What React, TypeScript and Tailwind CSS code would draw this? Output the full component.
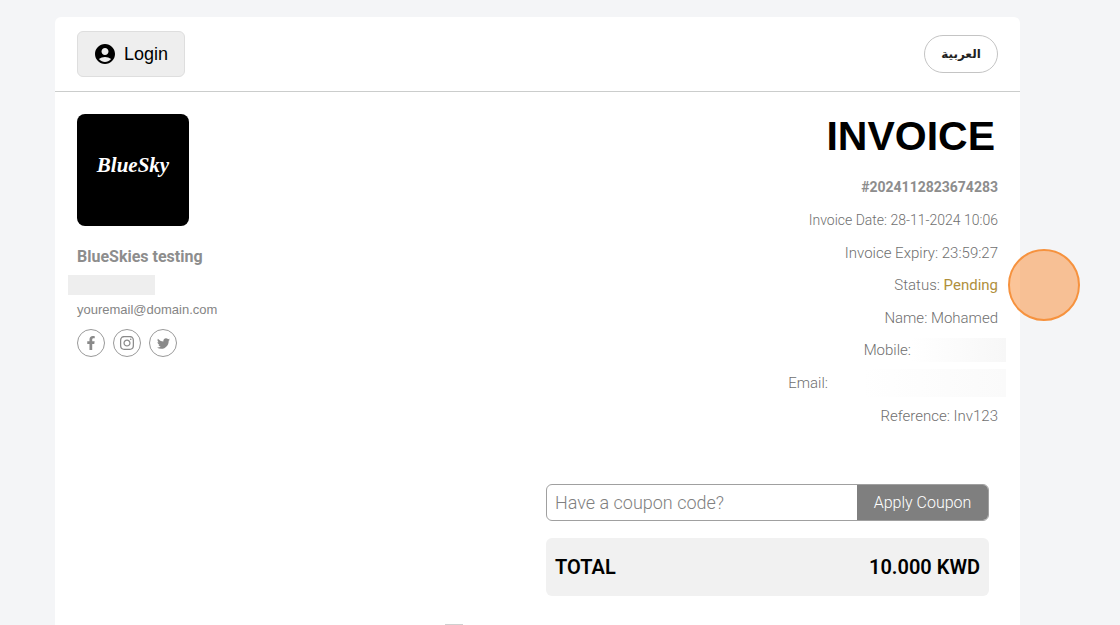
import { useState } from "react";
import { FaFacebookF, FaInstagram, FaTwitter } from "react-icons/fa";
import { MdAccountCircle } from "react-icons/md";

const socials = [
  { label: "Facebook", icon: FaFacebookF, size: 14 },
  { label: "Instagram", icon: FaInstagram, size: 16 },
  { label: "Twitter", icon: FaTwitter, size: 13 },
];

function Header() {
  return (
    <header className="flex items-center justify-between border-b border-[#cbcdcc] px-[22px] py-[14px]">
      <button className="flex h-[46px] items-center gap-[7px] rounded-md border border-[#dedede] bg-[#eeeeee] pr-4 pl-[15px] text-lg text-black">
        <MdAccountCircle size={24} />
        Login
      </button>
      <button
        lang="ar"
        className="h-[38px] w-[74px] rounded-full border border-[#c4c4c4] bg-white font-['DejaVu_Sans',sans-serif] text-xs font-bold text-[#222222]"
      >
        العربية
      </button>
    </header>
  );
}

function Vendor() {
  return (
    <section>
      <div className="flex size-28 items-center justify-center rounded-lg bg-black pb-2 font-['Liberation_Serif',serif] text-[21px] font-bold text-white italic">
        BlueSky
      </div>
      <h2 className="mt-5 font-['Roboto',sans-serif] text-base leading-[22px] font-bold text-[#8d8d8d]">
        BlueSkies testing
      </h2>
      <div className="mt-[7px] -ml-[9px] h-5 w-[87px] bg-[#eeeeee]" />
      <p className="mt-[5px] text-[13px] leading-5 text-[#858585]">
        youremail@domain.com
      </p>
      <div className="mt-[9px] flex gap-2">
        {socials.map(({ label, icon: Icon, size }) => (
          <a
            key={label}
            href="#"
            aria-label={label}
            className="flex size-7 items-center justify-center rounded-full border border-[#999999] text-[#8a8a8a]"
          >
            <Icon size={size} />
          </a>
        ))}
      </div>
    </section>
  );
}

function Details() {
  return (
    <section className="text-right text-[#6f6f6f]">
      <h1 className="pr-[3px] text-[41px] leading-[44px] font-bold text-black">
        INVOICE
      </h1>
      <div className="mt-[13px] grid h-[261px] grid-rows-8 items-center font-['Roboto',sans-serif] text-[15px] leading-6 font-light">
        <p className="text-sm font-bold text-[#8d8d8d]">#2024112823674283</p>
        <p className="text-sm">Invoice Date: 28-11-2024 10:06</p>
        <p className="text-[15px]">Invoice Expiry: 23:59:27</p>
        <p className="relative">
          Status: <span className="font-normal text-[#b08f3c]">Pending</span>
          <span className="absolute top-1/2 -right-[82px] size-[72px] -translate-y-1/2 rounded-full border-2 border-[#f6923e] bg-[#f99d54]/60" />
        </p>
        <p>Name: Mohamed</p>
        <div className="-mr-2 flex items-center justify-end">
          Mobile:
          <span className="h-6 w-[95px] bg-linear-to-r from-white to-[#f7f7f7]" />
        </div>
        <div className="-mr-2 flex items-center justify-end gap-[34px]">
          Email:
          <span className="h-7 w-36 bg-linear-to-r from-white to-[#fafafa]" />
        </div>
        <p>Reference: Inv123</p>
      </div>
    </section>
  );
}

function Summary() {
  const [coupon, setCoupon] = useState("");

  return (
    <section className="mt-[52px] mr-[31px] ml-auto w-[443px] font-['Roboto',sans-serif]">
      <form
        className="flex h-[37px] overflow-hidden rounded-md border border-[#a0a0a0]"
        onSubmit={(e) => e.preventDefault()}
      >
        <input
          aria-label="Coupon code"
          placeholder="Have a coupon code?"
          value={coupon}
          onChange={(e) => setCoupon(e.target.value)}
          className="min-w-0 flex-1 px-2 text-lg font-light text-black outline-none placeholder:text-[#808080]"
        />
        <button className="w-[131px] bg-[#7f7f7f] text-base font-light text-white">
          Apply Coupon
        </button>
      </form>
      <div className="mt-[17px] flex h-[58px] items-center justify-between rounded-md bg-[#f1f1f1] px-[9px] text-xl font-semibold text-black">
        <span>TOTAL</span>
        <span>10.000 KWD</span>
      </div>
    </section>
  );
}

export default function App() {
  return (
    <div className="flex min-h-screen flex-col bg-[#f4f5f7] pt-[17px] font-['Liberation_Sans',Arial,sans-serif]">
      <main className="mr-[100px] ml-[55px] flex flex-1 flex-col rounded-t-md bg-white">
        <Header />
        <div className="flex justify-between px-[22px] pt-[22px]">
          <Vendor />
          <Details />
        </div>
        <Summary />
        <div className="mt-auto ml-[390px] h-px w-[18px] bg-[#d0d0d0]" />
      </main>
    </div>
  );
}
